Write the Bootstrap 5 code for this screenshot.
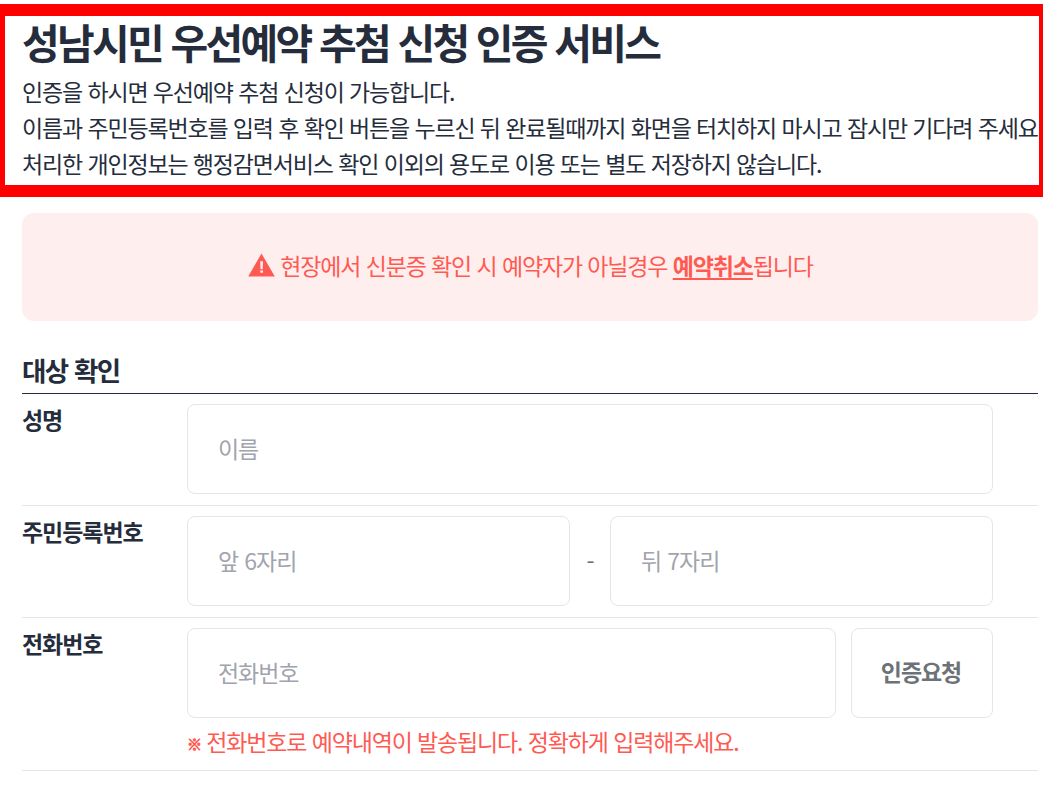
<!DOCTYPE html>
<html lang="ko">
<head>
    <meta charset="UTF-8">
    <meta name="viewport" content="width=device-width, initial-scale=1.0">
    <title>성남시민 우선예약 추첨 신청 인증 서비스</title>

    <!-- Bootstrap CSS -->
    <link href="https://cdn.jsdelivr.net/npm/bootstrap@5.3.0/dist/css/bootstrap.min.css" rel="stylesheet">
    <style>
        body {
            font-family: "Noto Sans CJK KR", sans-serif;
            font-size: 23px;
            line-height: 36px;
            letter-spacing: -1.16px;
            word-spacing: 0.13px;
            color: #252d3c;
            overflow: hidden;
        }

        /* Intro box */
        .intro {
            height: 193px;
            margin-top: 4px;
            padding: 0 0 0 17px;
            border: solid #f00;
            border-width: 12px 4px 12px 5px;
            white-space: nowrap;
            overflow: hidden;
        }
        .intro h1 {
            height: 57px;
            font-size: 41px;
            line-height: 50px;
            letter-spacing: -2.72px;
            word-spacing: -0.3px;
        }

        .page-body { padding: 16px 5px 0 22px; }

        .notice {
            height: 108px;
            padding-bottom: 4px;
            border-radius: 12px;
            background: #ffeeee;
            color: #ff5a52;
        }
        .notice svg { margin-right: 5px; }
        .notice u { text-underline-offset: 3px; text-decoration-thickness: 2px; }

        .section-title {
            height: 73px;
            padding-top: 31px;
            font-size: 26.5px;
            line-height: 36px;
            letter-spacing: -1.6px;
            word-spacing: 0.6px;
            border-bottom: 1px solid #252d3c;
        }

        /* Form rows */
        .form-line {
            padding: 10px 45px 11px 0;
            border-bottom: 1px solid #e3e7e9;
        }
        .form-line label { width: 165px; line-height: 30px; letter-spacing: -1.05px; }
        .form-line .form-control,
        .btn-verify {
            height: 90px;
            border: 1px solid #e3e7e9;
            border-radius: 8px;
            font-size: inherit;
            letter-spacing: -1.05px;
            word-spacing: 0.8px;
        }
        .form-line .form-control { padding: 0 30px 3px; }
        .form-line .form-control::placeholder { color: #a1a4ad; opacity: 1; }
        .dash { width: 40px; color: #6d7278; }
        .btn-verify { width: 142px; margin-left: 15px; padding: 0 2px 3px 0; color: #6d7278; }
        .help-text { margin-top: 5px; line-height: 36px; color: #ff5a52; }
        .help-mark {
            font-size: 15px;
            line-height: 1;
            vertical-align: 1px;
            -webkit-text-stroke: 0.8px #ff5a52;
        }
        .form-line:last-child { padding-bottom: 11px; }
    </style>
</head>
<body class="bg-white">

    <header class="intro">
        <h1 class="fw-bold mb-0">성남시민 우선예약 추첨 신청 인증 서비스</h1>
        <p class="mb-0">인증을 하시면 우선예약 추첨 신청이 가능합니다.</p>
        <p class="mb-0">이름과 주민등록번호를 입력 후 확인 버튼을 누르신 뒤 완료될때까지 화면을 터치하지 마시고 잠시만 기다려 주세요</p>
        <p class="mb-0">처리한 개인정보는 행정감면서비스 확인 이외의 용도로 이용 또는 별도 저장하지 않습니다.</p>
    </header>

    <main class="page-body">
        <div class="notice d-flex align-items-center justify-content-center">
            <svg width="28" height="24" viewBox="0 0 28 24" aria-hidden="true">
                <path d="M14.5 0.5L27.8 23.5H1.2Z" fill="#ff5a52"/>
                <path d="M13.2 8.3h2.8l-.3 8h-2.2zM13.2 17.5h2.8v2.3h-2.8z" fill="#ffeeee"/>
            </svg>
            <span>현장에서 신분증 확인 시 예약자가 아닐경우 <u class="fw-bold">예약취소</u>됩니다</span>
        </div>

        <h2 class="section-title fw-bold mb-0">대상 확인</h2>

        <form>
            <div class="form-line d-flex">
                <label for="name" class="fw-bold flex-shrink-0">성명</label>
                <input type="text" id="name" class="form-control" placeholder="이름">
            </div>

            <div class="form-line d-flex">
                <label for="rrn1" class="fw-bold flex-shrink-0">주민등록번호</label>
                <div class="d-flex align-items-center flex-grow-1">
                    <input type="text" id="rrn1" class="form-control" placeholder="앞 6자리">
                    <span class="dash flex-shrink-0 text-center">-</span>
                    <input type="text" id="rrn2" class="form-control" placeholder="뒤 7자리">
                </div>
            </div>

            <div class="form-line d-flex">
                <label for="phone" class="fw-bold flex-shrink-0">전화번호</label>
                <div class="flex-grow-1">
                    <div class="d-flex">
                        <input type="text" id="phone" class="form-control" placeholder="전화번호">
                        <button type="button" class="btn btn-verify fw-bold flex-shrink-0">인증요청</button>
                    </div>
                    <p class="help-text mb-0"><span class="help-mark">※</span> 전화번호로 예약내역이 발송됩니다. 정확하게 입력해주세요.</p>
                </div>
            </div>
        </form>
    </main>

    <!-- Bootstrap JS Bundle -->
    <script src="https://cdn.jsdelivr.net/npm/bootstrap@5.3.0/dist/js/bootstrap.bundle.min.js"></script>
</body>
</html>
